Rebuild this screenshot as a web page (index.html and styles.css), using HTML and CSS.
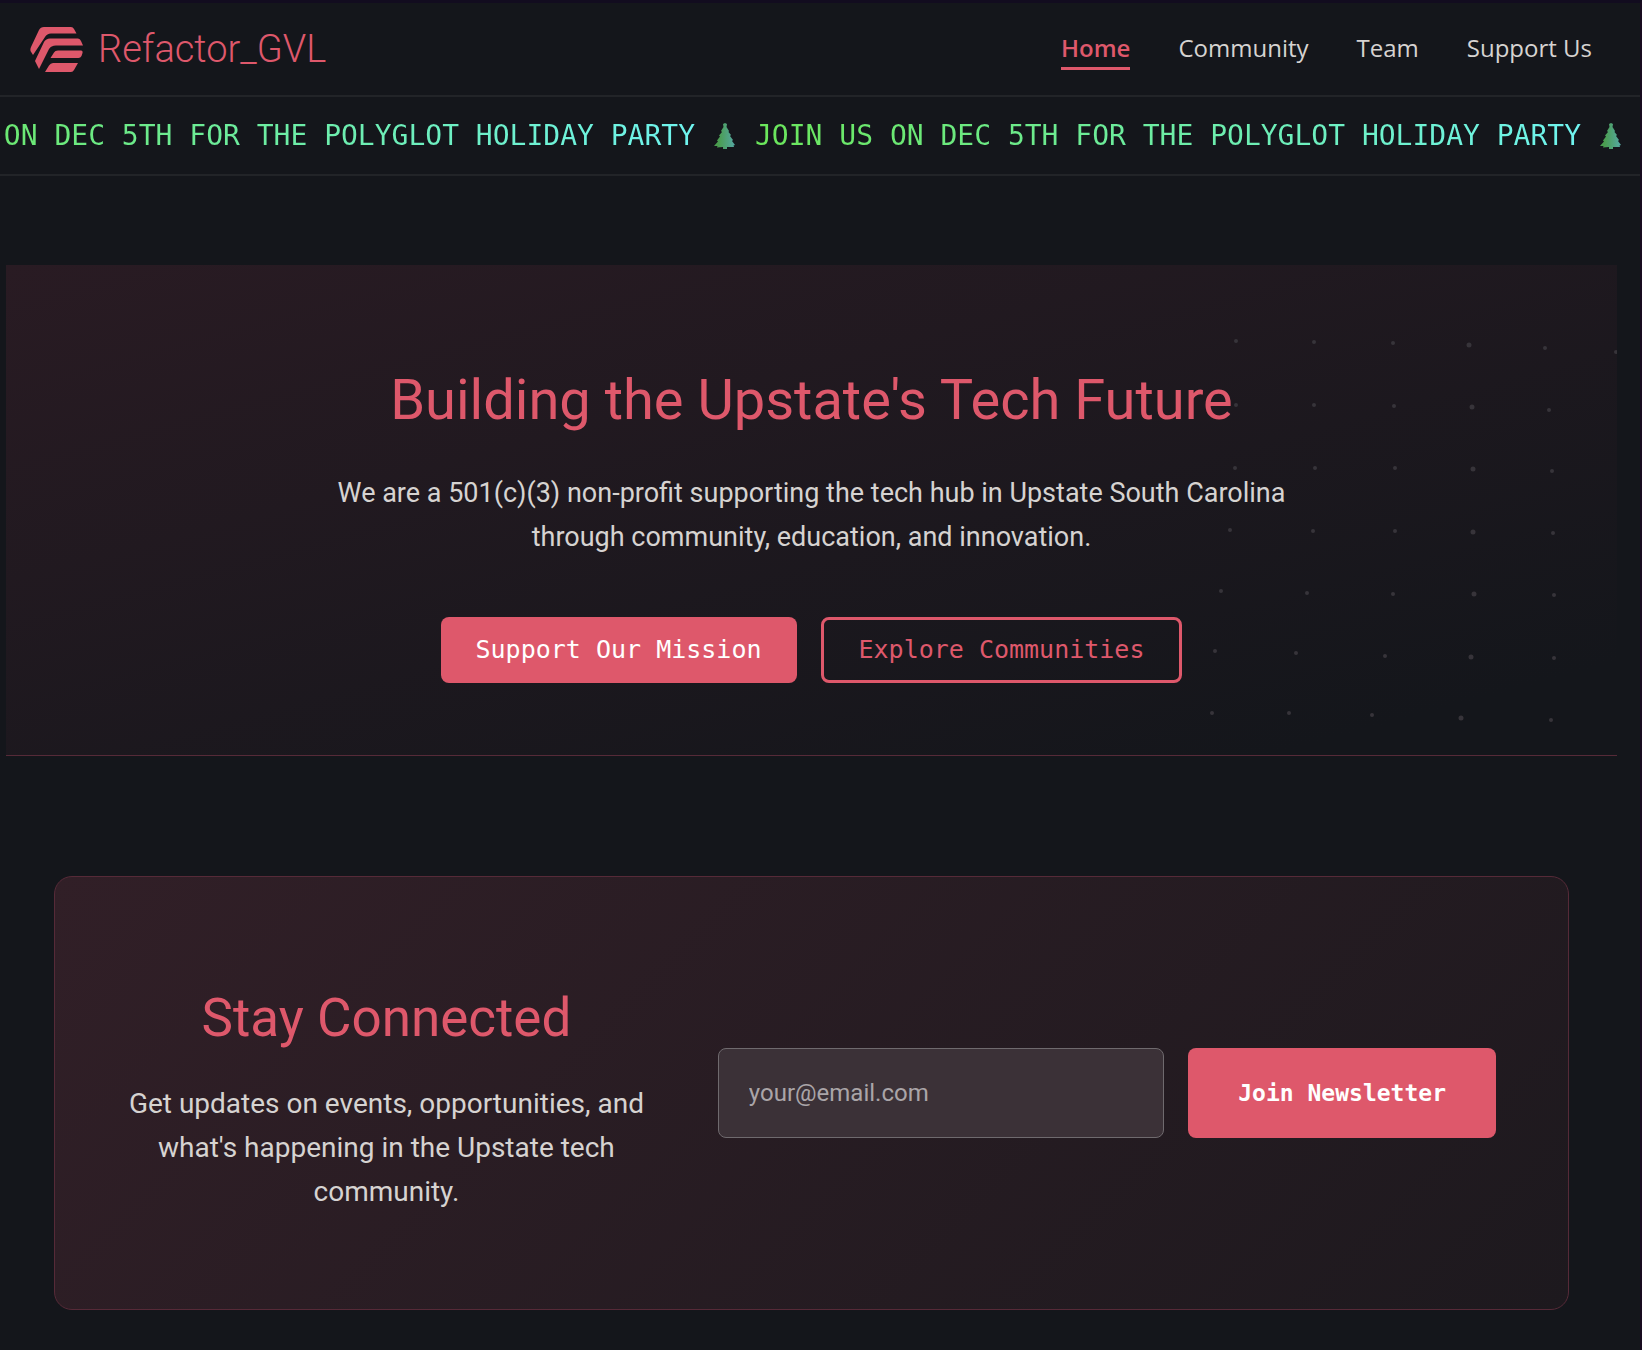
FILE: index.html
```html
<!DOCTYPE html>
<html lang="en">

<head>
    <meta charset="UTF-8">
    <meta name="viewport" content="width=device-width, initial-scale=1.0">
    <title>Refactor_GVL</title>
    <link rel="stylesheet" href="styles.css">
</head>

<body>
    <header class="site-header">
        <a href="#" class="logo">
            <svg class="logo-mark" viewBox="0 0 53 45" aria-hidden="true">
                <path d="M14 0H41Q43 0 44 2L46.500 6.500H21Q17 6.500 15 10L3 28L.5 24Q0 22 1 20L9 3Q10.500 0 14 0Z" />
                <path d="M20 11.500H48Q50 11.500 51 14L53 18.500H26Q21 18.500 19 22L9 42L5 34L14 15Q16 11.500 20 11.500Z" />
                <path d="M28 23.500H51Q53 23.500 52.500 26L51.500 29Q50.500 31 48.500 31H20.500L24 25.500Q25 23.500 28 23.500Z" />
                <path d="M23 36H48L44 43Q43 45 41 45H15L19 38.500Q20.500 36 23 36Z" />
            </svg>
            <span>Refactor_GVL</span>
        </a>
        <nav class="nav">
            <a href="#" class="current">Home</a>
            <a href="#">Community</a>
            <a href="#">Team</a>
            <a href="#">Support Us</a>
        </nav>
    </header>

    <div class="marquee">
        <div class="track">
            <span class="message">JOIN US ON DEC 5TH FOR THE POLYGLOT HOLIDAY PARTY</span>
            <svg class="tree" viewBox="0 0 22 26" aria-hidden="true">
                <use href="#tree" />
            </svg>
            <span class="message">JOIN US ON DEC 5TH FOR THE POLYGLOT HOLIDAY PARTY</span>
            <svg class="tree" viewBox="0 0 22 26" aria-hidden="true">
                <defs>
                    <linearGradient id="tree-fill">
                        <stop offset="0.2" stop-color="#4a9d4e" />
                        <stop offset="1" stop-color="#55a8a4" />
                    </linearGradient>
                </defs>
                <path id="tree" fill="url(#tree-fill)" d="M11 0L13 1L12.500 4L15 8L14.500 9L17 12L16 13L19 17L18 18L21 22L19.500 22.500L20 24L13 24V26H9V24L3 24.500L3.500 23L0 23L4 18.500L3 17.500L6 13.500L5 12.500L8 9L7 8L9.500 4L9 1Z" />
            </svg>
        </div>
    </div>

    <main>
        <section class="hero">
            <svg class="dots" viewBox="0 0 437 490" aria-hidden="true">
                <circle cx="56" cy="76" r="2" />
                <circle cx="134" cy="77" r="2" />
                <circle cx="213" cy="78" r="2" />
                <circle cx="289" cy="80" r="2.500" />
                <circle cx="365" cy="83" r="2" />
                <circle cx="436" cy="87" r="2" />

                <circle cx="56" cy="140" r="2" />
                <circle cx="134" cy="140" r="2" />
                <circle cx="214" cy="141" r="2" />
                <circle cx="292" cy="142" r="2.500" />
                <circle cx="369" cy="145" r="2" />

                <circle cx="55" cy="203" r="2" />
                <circle cx="135" cy="203" r="2" />
                <circle cx="215" cy="203" r="2" />
                <circle cx="293" cy="204" r="2.500" />
                <circle cx="372" cy="206" r="2" />

                <circle cx="50" cy="265" r="2" />
                <circle cx="133" cy="266" r="2" />
                <circle cx="215" cy="266" r="2" />
                <circle cx="293" cy="267" r="2.500" />
                <circle cx="373" cy="268" r="2" />

                <circle cx="41" cy="326" r="2" />
                <circle cx="127" cy="328" r="2" />
                <circle cx="213" cy="329" r="2" />
                <circle cx="294" cy="329" r="2.500" />
                <circle cx="374" cy="330" r="2" />

                <circle cx="35" cy="386" r="2" />
                <circle cx="116" cy="388" r="2" />
                <circle cx="205" cy="391" r="2" />
                <circle cx="291" cy="392" r="2.500" />
                <circle cx="374" cy="393" r="2" />

                <circle cx="32" cy="448" r="2" />
                <circle cx="109" cy="448" r="2" />
                <circle cx="192" cy="450" r="2" />
                <circle cx="281" cy="453" r="2.500" />
                <circle cx="371" cy="455" r="2" />
            </svg>
            <h1>Building the Upstate's Tech Future</h1>
            <p>We are a 501(c)(3) non-profit supporting the tech hub in Upstate South Carolina through community, education, and innovation.</p>
            <div class="actions">
                <a href="#" class="btn btn-solid">Support Our Mission</a>
                <a href="#" class="btn btn-outline">Explore Communities</a>
            </div>
        </section>

        <section class="newsletter">
            <div class="intro">
                <h2>Stay Connected</h2>
                <p>Get updates on events, opportunities, and what's happening in the Upstate tech community.</p>
            </div>
            <form class="signup">
                <input type="email" placeholder="your@email.com" aria-label="Email address">
                <button type="button">Join Newsletter</button>
            </form>
        </section>
    </main>
</body>

</html>
```
FILE: styles.css
```css
* {
    margin: 0;
    padding: 0;
    box-sizing: border-box;
}

body {
    background: #14161b;
    border-top: 3px solid #120c1f;
    border-right: 2px solid #180b1f;
    color: #d6d3d1;
    font-family: Roboto, sans-serif;
    font-size: 28px;
    line-height: 44px;
    overflow-x: hidden;
}

a {
    color: inherit;
    text-decoration: none;
}

.site-header {
    display: flex;
    align-items: center;
    justify-content: space-between;
    height: 94px;
    padding: 0 48px 0 30px;
    border-bottom: 2px solid #222428;
}

.logo {
    display: flex;
    align-items: center;
    gap: 15px;
    color: #de586b;
    font-size: 38px;
    font-weight: 300;
    line-height: 48px;
}

.logo-mark {
    width: 53px;
    height: 45px;
    fill: #de586b;
}

.nav {
    display: flex;
    gap: 48px;
    font-family: "Open Sans", sans-serif;
    font-size: 24px;
    line-height: 38px;
}

.nav a {
    border-bottom: 3px solid transparent;
}

.nav .current {
    border-color: #de586b;
    color: #de586b;
    font-weight: 600;
}

.marquee {
    height: 79px;
    overflow: hidden;
    border-bottom: 2px solid #222428;
}

/* the strip is shown part way through its first message */
.track {
    display: flex;
    align-items: center;
    width: max-content;
    height: 77px;
    transform: translateX(-131px);
}

.message {
    background: linear-gradient(90deg, #6be65a, #6ff4f0);
    background-clip: text;
    -webkit-background-clip: text;
    color: transparent;
    font-family: "DejaVu Sans Mono", monospace;
    font-size: 28px;
}

.tree {
    width: 22px;
    height: 26px;
    margin: 0 19px;
}

main {
    padding: 89px 23px 40px 6px;
}

.hero {
    position: relative;
    display: flex;
    flex-direction: column;
    align-items: center;
    padding: 96px 24px 72px;
    border-bottom: 1px solid #562a38;
    background: linear-gradient(165deg, #291b23, #14161b 90%);
    text-align: center;
}

/* faint dot grid behind the right side of the hero */
.dots {
    position: absolute;
    top: 0;
    right: 0;
    width: 437px;
    height: 490px;
    fill: #37343a;
}

h1,
h2 {
    color: #de586b;
    font-weight: 400;
}

h1 {
    margin-bottom: 32px;
    font-size: 56px;
    line-height: 78px;
}

.hero p {
    max-width: 980px;
    font-size: 27px;
}

.actions {
    display: flex;
    gap: 24px;
    margin-top: 58px;
}

.btn {
    padding: 11px 35px;
    border-radius: 8px;
    color: #de586b;
    font-family: "DejaVu Sans Mono", monospace;
    font-size: 25px;
}

.btn-solid {
    background: #de586b;
    color: #fff;
}

.btn-outline {
    padding: 8px 35px;
    border: 3px solid #de586b;
}

.newsletter {
    display: grid;
    grid-template-columns: 2fr 3fr;
    align-items: center;
    gap: 72px;
    margin: 120px 48px 0;
    padding: 95px 72px;
    border: 1px solid #562a38;
    border-radius: 18px;
    background: linear-gradient(135deg, #311f27, #1d191e);
}

.intro {
    text-align: center;
}

h2 {
    margin-bottom: 18px;
    font-size: 53px;
    line-height: 92px;
}

.signup {
    display: flex;
    gap: 24px;
}

.signup input,
.signup button {
    height: 90px;
    border-radius: 8px;
}

.signup input {
    flex: 1;
    min-width: 0;
    padding: 0 30px;
    border: 1px solid #6f6a6e;
    background: #3b3137;
    color: #d6d3d1;
    font-family: Roboto, sans-serif;
    font-size: 24px;
}

.signup input::placeholder {
    color: #aaa5a8;
}

.signup button {
    padding: 0 50px;
    border: 0;
    background: #de586b;
    color: #fff;
    font-family: "DejaVu Sans Mono", monospace;
    font-size: 23px;
    font-weight: 700;
}
```
